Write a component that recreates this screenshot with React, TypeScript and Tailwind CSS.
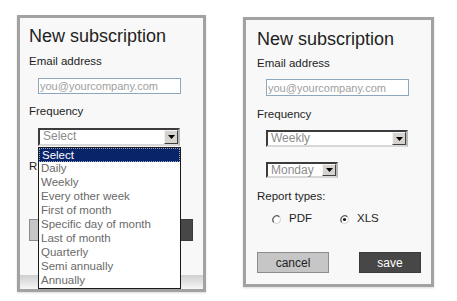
import React from 'react';

const font = { fontFamily: '"Liberation Sans", Arial, sans-serif' };

const items = [
  'Select',
  'Daily',
  'Weekly',
  'Every other week',
  'First of month',
  'Specific day of month',
  'Last of month',
  'Quarterly',
  'Semi annually',
  'Annually',
];

const Arrow = () => (
  <div className="flex h-full w-[14px] items-center justify-center border border-t-[#f4f4f4] border-l-[#f4f4f4] border-r-[#404040] border-b-[#404040] bg-[#d6d3ce]">
    <svg width="7" height="4" viewBox="0 0 7 4">
      <path d="M0 0 H7 L3.5 4 Z" fill="#000" />
    </svg>
  </div>
);

const FakeSelect = ({ value, className }: { value: string; className: string }) => (
  <div
    className={`flex items-stretch border-2 border-t-[#3c3c3c] border-l-[#3c3c3c] border-r-[#b8b8b8] border-b-[#d8d8d8] bg-white ${className}`}
  >
    <span className="flex-1 pl-[3px] text-[12px] leading-[13px] text-[#8c8c8c]">{value}</span>
    <Arrow />
  </div>
);

const Radio = ({ checked }: { checked?: boolean }) => (
  <svg width="9" height="9" viewBox="0 0 9 9">
    <circle cx="4.5" cy="4.5" r="4" fill="#fff" stroke="#d0d0d0" />
    <path d="M1.7 7.3 A4 4 0 0 1 7.3 1.7" fill="none" stroke="#5a5a5a" strokeWidth="1.2" />
    {checked && <circle cx="4.5" cy="4.5" r="1.6" fill="#111" />}
  </svg>
);

const EmailInput = ({ className }: { className: string }) => (
  <div className={`flex items-center border border-[#8fa6bf] bg-white pl-[1px] ${className}`}>
    <span className="text-[11px] leading-[12px] text-[#a0a0a0]">you@yourcompany.com</span>
  </div>
);

// labels are left off when the buttons sit under the open dropdown
const Buttons = ({ className, hidden }: { className: string; hidden?: boolean }) => (
  <div className={`flex ${className}`}>
    <button className="flex w-[72px] items-center justify-center border border-[#8c8c8c] bg-[#c6c6c6] text-[12px] text-[#222]">
      {hidden ? null : 'cancel'}
    </button>
    <button className="ml-[30px] flex w-[62px] items-center justify-center border border-[#3a3a3a] bg-[#474747] text-[12px] text-white">
      {hidden ? null : 'save'}
    </button>
  </div>
);

export default function App() {
  return (
    <div className="flex h-[301px] w-[457px] items-start bg-white pl-[17px] pt-[15px]" style={font}>
      {/* left panel: frequency dropdown open */}
      <div className="flex h-[277px] w-[189px] flex-col border-[3px] border-[#a2a2a2] bg-[#f8f8f8] shadow-[0_1px_2px_rgba(0,0,0,0.15)]">
        <div className="flex flex-col pl-[9px] pt-[8px] text-[#1e1e1e]">
          <div className="h-[20px] text-[18px] leading-[20px]">New subscription</div>
          <div className="mt-[8px] text-[11.5px] leading-[14px]">Email address</div>
          <EmailInput className="ml-[9px] mt-[10px] h-[16px] w-[143px]" />
          <div className="mt-[10px] text-[11.5px] leading-[14px]">Frequency</div>
          <div className="relative ml-[9px] mt-[10px] h-[18px] w-[142px]">
            <FakeSelect value="Select" className="h-full w-full" />
            <div className="absolute left-0 top-[19px] z-10 flex w-[143px] flex-col border border-[#1a1a1a] bg-white">
              {items.map((it, i) => (
                <div
                  key={it}
                  className={`h-[14px] pl-[2px] text-[11.5px] leading-[13px] ${
                    i === 0
                      ? 'border border-dotted border-[#9aa6c8] bg-[#0a246a] text-white'
                      : 'text-[#6a6a6a]'
                  }`}
                >
                  {it}
                </div>
              ))}
            </div>
          </div>
          <div className="mt-[13px] w-[9px] overflow-hidden whitespace-nowrap text-[11.5px] leading-[14px]">R</div>
          <div className="mt-[8px] h-[14px]" />
          <Buttons className="mt-[24px] h-[22px]" hidden />
        </div>
        <div className="mt-auto h-[14px] bg-gradient-to-b from-[#cfcfcf] to-[#f6f6f6]" />
      </div>

      {/* right panel: weekly */}
      <div className="ml-[37px] mt-[2px] flex h-[270px] w-[191px] flex-col border-[3px] border-[#a2a2a2] bg-[#f8f8f8] shadow-[0_1px_2px_rgba(0,0,0,0.15)]">
        <div className="flex flex-col pl-[11px] pt-[9px] text-[#1e1e1e]">
          <div className="h-[20px] text-[18px] leading-[20px]">New subscription</div>
          <div className="mt-[7px] text-[11.5px] leading-[14px]">Email address</div>
          <EmailInput className="ml-[9px] mt-[9px] h-[17px] w-[143px]" />
          <div className="mt-[11px] text-[11.5px] leading-[14px]">Frequency</div>
          <FakeSelect value="Weekly" className="ml-[9px] mt-[9px] h-[17px] w-[142px]" />
          <FakeSelect value="Monday" className="ml-[9px] mt-[15px] h-[16px] w-[72px]" />
          <div className="mt-[11px] text-[11.5px] leading-[14px]">Report types:</div>
          <div className="mt-[9px] flex h-[14px] items-center text-[11.5px]">
            <span className="ml-[15px] flex"><Radio /></span>
            <span className="ml-[8px]">PDF</span>
            <span className="ml-[28px] flex"><Radio checked /></span>
            <span className="ml-[8px]">XLS</span>
          </div>
          <Buttons className="mt-[26px] h-[21px]" />
        </div>
      </div>
    </div>
  );
}
